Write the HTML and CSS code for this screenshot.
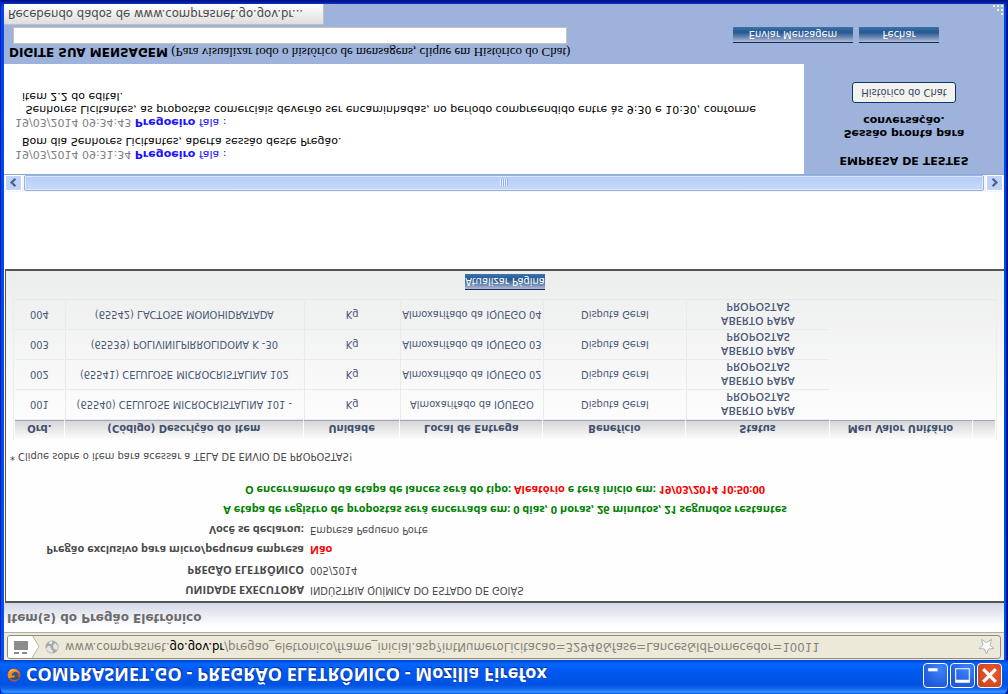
FILE: index.html
```html
<!DOCTYPE html>
<html lang="pt-BR">
<head>
<meta charset="utf-8">
<title>COMPRASNET.GO - PREGRÃO ELETRÔNICO</title>
<link rel="stylesheet" href="styles.css">
</head>
<body>
<div class="window">
  <header class="titlebar">
    <svg class="app-icon" viewBox="0 0 14 14" aria-hidden="true">
      <circle cx="7" cy="7" r="6.5" fill="#d9531e"/>
      <path d="M2 4Q6 1 11 3L13 7Q12 4 9 4L4 6Z" fill="#243c78"/>
      <circle cx="7.5" cy="6.5" r="3.8" fill="#245a8c"/>
      <path d="M1 5Q0 12 6 13Q11 13 13 8Q10 11 7 10Q4 8 5 6L7 7L8 5L4 4Q2 3 1 5Z" fill="#f58b22"/>
      <path d="M2 9Q5 13 10 11Q7 14 3 12Z" fill="#ffc53a"/>
    </svg>
    <h1 class="title">COMPRASNET.GO - PREGRÃO ELETRÔNICO - Mozilla Firefox</h1>
    <div class="controls">
      <button class="control" type="button" aria-label="Minimizar"><svg viewBox="0 0 22 22"><path d="M4 15h9v3H4z" fill="#fff"/></svg></button>
      <button class="control" type="button" aria-label="Maximizar"><svg viewBox="0 0 22 22"><path d="M4 4h14v14H4zM5 7v10h12V7z" fill="#fff" fill-rule="evenodd"/></svg></button>
      <button class="control control-close" type="button" aria-label="Fechar janela"><svg viewBox="0 0 22 22"><path d="M5 5L17 17M17 5L5 17" stroke="#fff" stroke-width="3"/></svg></button>
    </div>
  </header>

  <div class="content">
    <div class="address-strip">
      <div class="address">
        <svg class="identity" viewBox="0 0 32 23" aria-hidden="true">
          <path d="M0 0H24L31 11.500L24 23H0Z" fill="#fff"/>
          <path d="M24 0L31 11.500L24 23" fill="none" stroke="#b9b6a8"/>
          <path d="M6 4h5v2H6zM14 4h5v2h-5zM6 8h14v9H6z" fill="#8b8b8b"/>
        </svg>
        <svg class="globe" viewBox="0 0 14 14" aria-hidden="true">
          <circle cx="7" cy="7" r="6.500" fill="#a9a9a9"/>
          <path d="M1 5L4 2L7 1L8 3L6 5L5 8L3 8ZM9 5L12 4L13 8L10 11L8 8ZM4 10L7 10L7 13L4 12Z" fill="#e6e6e4"/>
        </svg>
        <span class="url">www.comprasnet.<b>go.gov.br</b>/pregao_eletronico/frame_inicial.asp?intNumeroLicitacao=32946&amp;fase=Lances&amp;IdFornecedor=10011</span>
        <svg class="star" viewBox="0 0 17 17" aria-hidden="true"><path d="M8.500 1L10.500 6L16 6.500L12 10L13.500 15.500L8.500 12.500L3.500 15.500L5 10L1 6.500L6.500 6Z" fill="#fbfbfb" stroke="#b5b5b5"/></svg>
      </div>
    </div>

    <h2 class="page-heading">Item(s) do Pregão Eletrônico</h2>

    <main class="auction">
      <dl class="facts">
        <dt>UNIDADE EXECUTORA</dt><dd>INDÚSTRIA QUÍMICA DO ESTADO DE GOIÁS</dd>
        <dt>PREGÃO ELETRÔNICO</dt><dd>005/2014</dd>
        <dt>Pregão exclusivo para micro/pequena empresa</dt><dd class="alert">Não</dd>
        <dt>Você se declarou:</dt><dd>Empresa Pequeno Porte</dd>
      </dl>
      <p class="stage">A etapa de registro de propostas será encerrada em: 0 dias, 0 horas, 26 minutos, 21 segundos restantes</p>
      <p class="stage">O encerramento da etapa de lances será do tipo: <span class="alert">Aleatório</span> e terá início em: <span class="alert">19/03/2014 10:50:00</span></p>
      <p class="hint">* Clique sobre o item para acessar a TELA DE ENVIO DE PROPOSTAS!</p>
      <div class="lot">
        <table class="items">
          <colgroup><col class="c-ord"><col class="c-item"><col class="c-unit"><col class="c-wide"><col class="c-wide"><col class="c-wide"><col class="c-wide"><col class="c-end"></colgroup>
          <thead><tr><th>Ord.</th><th>(Código) Descrição do Item</th><th>Unidade</th><th>Local de Entrega</th><th>Benefício</th><th>Status</th><th>Meu Valor Unitário</th><th></th></tr></thead>
          <tbody>
            <tr><td>001</td><td>(65540) CELULOSE MICROCRISTALINA 101 -</td><td>Kg</td><td>Almoxarifado da IQUEGO</td><td>Disputa Geral</td><td class="status">ABERTO PARA PROPOSTAS</td><td class="blank" colspan="2"></td></tr>
            <tr><td>002</td><td>(65541) CELULOSE MICROCRISTALINA 102</td><td>Kg</td><td>Almoxarifado da IQUEGO 02</td><td>Disputa Geral</td><td class="status">ABERTO PARA PROPOSTAS</td><td class="blank" colspan="2"></td></tr>
            <tr><td>003</td><td>(65539) POLIVINILPIRROLIDONA K -30</td><td>Kg</td><td>Almoxarifado da IQUEGO 03</td><td>Disputa Geral</td><td class="status">ABERTO PARA PROPOSTAS</td><td class="blank" colspan="2"></td></tr>
            <tr><td>004</td><td>(65542) LACTOSE MONOHIDRATADA</td><td>Kg</td><td>Almoxarifado da IQUEGO 04</td><td>Disputa Geral</td><td class="status">ABERTO PARA PROPOSTAS</td><td class="blank" colspan="2"></td></tr>
          </tbody>
        </table>
        <button class="action action-refresh" type="button">Atualizar Página</button>
      </div>
    </main>

    <div class="spacer"></div>

    <div class="scrollbar">
      <button class="arrow" type="button" aria-label="Rolar para a esquerda"><svg viewBox="0 0 16 16"><path d="M10 4L6 8L10 12" fill="none" stroke="#4d6185" stroke-width="2.500"/></svg></button>
      <div class="thumb"><svg class="grip" viewBox="0 0 8 7"><path d="M.5 0v7M2.500 0v7M4.500 0v7M6.500 0v7" stroke="#eef4fe"/><path d="M1.500 0v7M3.500 0v7M5.500 0v7M7.500 0v7" stroke="#8cb0f8"/></svg></div>
      <button class="arrow" type="button" aria-label="Rolar para a direita"><svg viewBox="0 0 16 16"><path d="M6 4L10 8L6 12" fill="none" stroke="#4d6185" stroke-width="2.500"/></svg></button>
    </div>

    <section class="chat">
      <div class="log">
        <article class="entry">
          <p><time>19/03/2014 09:31:34</time> <span class="speaker"><b>Pregoeiro</b> fala :</span></p>
          <p class="said">Bom dia Senhores Licitantes, aberta sessão deste Pregão.</p>
        </article>
        <article class="entry">
          <p><time>19/03/2014 09:34:43</time> <span class="speaker"><b>Pregoeiro</b> fala :</span></p>
          <p class="said">&nbsp;Senhores Licitantes, as propostas comerciais deverão ser encaminhadas, no período compreendido entre às 9:30 e 10:30, conforme<br>item 2.2 do edital.</p>
        </article>
      </div>
      <aside class="session">
        <p>EMPRESA DE TESTES</p>
        <p class="ready">Sessão pronta para<br>conversação.</p>
        <button class="history" type="button">Histórico do Chat</button>
      </aside>
    </section>

    <form class="compose">
      <div class="message">
        <label for="message"><b>DIGITE SUA MENSAGEM</b> (Para visualizar todo o histórico de mensagens, clique em Histórico do Chat)</label>
        <input id="message" type="text">
      </div>
      <div class="actions">
        <button class="action action-send" type="button">Enviar Mensagem</button>
        <button class="action action-exit" type="button">Fechar</button>
      </div>
    </form>

    <footer class="bottom">
      <div class="loading">Recebendo dados de www.comprasnet.go.gov.br...</div>
      <svg class="resize" viewBox="0 0 11 11" aria-hidden="true"><path d="M8 0h2v2H8zM4 4h2v2H4zM8 4h2v2H8zM0 8h2v2H0zM4 8h2v2H4zM8 8h2v2H8z" fill="#f2efdf"/></svg>
    </footer>
  </div>
</div>
</body>
</html>
```
FILE: styles.css
```css
* { box-sizing: border-box; }
body { margin: 0; background: #9db3dc; }
h1, h2, p, dl, dd { margin: 0; }
button, input { font: inherit; margin: 0; padding: 0; }
svg { display: block; }

/* The whole window is mirrored top to bottom. */
.window {
  display: flex;
  flex-direction: column;
  min-height: 100vh;
  padding: 0 4px 4px;
  background: linear-gradient(#0050e8, #0046e0 99%, #001690);
  box-shadow: inset 1px 0 #0019cf, inset -1px 0 #00138c, inset -2px 0 #001ea0, inset 0 -2px #00138c;
  transform: scaleY(-1);
  font: 11px/14px "DejaVu Sans Condensed", "DejaVu Sans", sans-serif;
  color: #4a4a4a;
}

.titlebar {
  display: flex;
  align-items: center;
  gap: 5px;
  height: 34px;
  margin: 0 -4px;
  padding: 3px 6px 0 7px;
  border-radius: 7px 7px 0 0;
  background: linear-gradient(#0058e6 0, #3a93ff 2px, #1268f0 5px, #0053e1 9px, #0058ee 22px, #0066ff 30px, #003fd0 34px);
}
.app-icon { width: 14px; height: 14px; }
.title {
  flex: 1;
  font: bold 18px/24px "Open Sans", sans-serif;
  color: #fff;
  text-shadow: 1px 1px #0a2b96;
  white-space: nowrap;
}
.controls { display: flex; gap: 2px; }
.control {
  width: 25px;
  height: 25px;
  border: 1px solid #fff;
  border-radius: 4px;
  background: radial-gradient(circle at 70% 80%, #3d84fc, #2159dc 75%);
}
.control-close { background: radial-gradient(circle at 60% 60%, #ea5a30, #c9401a); }

.content { flex: 1; display: flex; flex-direction: column; background: #fff; }

.address-strip { padding: 1px 3px 2px; background: #ece9d8; border-bottom: 1px solid #b0aea5; }
.address {
  display: flex;
  align-items: center;
  height: 24px;
  border: 1px solid #8f8c80;
  border-radius: 3px;
  overflow: hidden;
}
.identity { width: 32px; height: 23px; }
.globe { width: 14px; height: 14px; margin: 0 6px 0 5px; }
.url { flex: 1; font-size: 13px; line-height: 20px; color: #85827a; white-space: nowrap; }
.url b { font-weight: normal; color: #000; }
.star { width: 17px; height: 17px; margin-right: 5px; }

.page-heading {
  padding: 7px 3px 8px;
  font: bold 12px/14px "DejaVu Sans", sans-serif;
  color: #6b6b6b;
  background: linear-gradient(#fff 20%, #d4d8e6);
}

.auction {
  margin-left: 1px;
  padding: 1px 7px 3px;
  border-top: 2px solid #555;
  border-bottom: 2px solid #555;
  border-left: 1px solid #555;
  background: linear-gradient(#fefefe 50%, #eceded);
}
.facts { display: grid; grid-template-columns: 291px 1fr; column-gap: 6px; line-height: 20px; }
.facts dt { text-align: right; font: bold 11px/20px "Open Sans", sans-serif; }
.facts .alert { font: bold 11px/20px "Open Sans", sans-serif; }
.stage { font: bold 11px/20px "Open Sans", sans-serif; text-align: center; color: #008000; }
.alert { color: #f00; }
.hint { margin: 17px -3px 9px; line-height: 14px; }

.lot { border: 1px solid #eceded; border-top: 0; text-align: center; border-bottom: 0; }
.items { width: 100%; table-layout: fixed; border-spacing: 1px 0; color: #4a5875; border-bottom: 1px solid #e8e8e8; }
.c-ord { width: 5%; }
.c-item { width: 24.500%; }
.c-unit { width: 9.800%; }
.c-wide { width: 14.600%; }
.c-end { width: 2.300%; }
.items th {
  height: 20px;
  padding: 4px 0 0;
  font: bold 10px/14px "DejaVu Sans", sans-serif;
  color: #40506e;
  background: linear-gradient(#fff, #d6d6d8);
  border-bottom: 1px solid #9aa8c6;
}
.items td { height: 30px; padding: 0; border: solid #e9eaec; border-width: 1px 0 0 1px; line-height: 14px; white-space: nowrap; }
.items td:first-child, .items .blank { border-left: 0; }
.items .blank { border-top: 0; }
.items .status { padding: 0 30px; white-space: normal; font: 600 11px/14px "Open Sans", sans-serif; }

.action {
  height: 16px;
  border: 0;
  border-top: 1px solid #14285c;
  font-size: 11px;
  line-height: 14px;
  color: #fff;
  white-space: nowrap;
  overflow: hidden;
  background: linear-gradient(#b4bcd2, #5679ab 40%, #25578f 65%, #3c74ae);
}
.action-refresh { width: 80px; margin-top: 9px; }
.action-send { width: 120px; }
.action-exit { width: 80px; }

.spacer { flex: 1; min-height: 76px; }

.scrollbar { display: flex; gap: 2px; height: 18px; padding: 1px 1px 0; border-bottom: 1px solid #8cabd6; background: #f6f5ef; }
.arrow { width: 17px; height: 16px; border: 1px solid #fff; border-radius: 2px; background: #c0d3fb; }
.thumb { flex: 1; display: flex; align-items: center; justify-content: center; border: 1px solid #98b4e6; border-radius: 2px; background: linear-gradient(#c9d8fd, #b4cefc); box-shadow: inset 0 0 0 1px #dce8fd; }
.grip { width: 8px; height: 7px; }

.chat { display: flex; background: #9db3dc; color: #000; font: 11px/13px "DejaVu Sans", sans-serif; }
.log { width: 80%; min-height: 110px; padding: 13px 12px 0 11px; background: #fff; }
.entry { margin-bottom: 6px; }
.said { padding-left: 7px; white-space: nowrap; }
.log time { color: #808080; }
.speaker { color: #2010ff; }
.session { flex: 1; padding-top: 7px; text-align: center; font-weight: bold; }
.ready { margin: 14px 0 11px; }
.history {
  width: 104px;
  height: 21px;
  border: 1px solid #003c74;
  border-radius: 3px;
  background: #f3f2ec;
  font: 11px/14px "DejaVu Sans Condensed", sans-serif;
  color: #30466c;
}

.compose { display: flex; align-items: flex-end; background: #9db3dc; padding: 4px 65px 2px 5px; }
.message { flex: 1; display: flex; flex-direction: column; color: #000; }
.message label { font: 13px/16px "Liberation Serif", serif; white-space: nowrap; }
.message label b { font: bold 12px/16px "DejaVu Sans", sans-serif; }
.message input { width: 554px; max-width: 100%; height: 17px; margin-left: 4px; padding: 0 3px; border: 1px solid #c4c4bc; background: #fff; }
.actions { display: flex; gap: 6px; }

.bottom { display: flex; justify-content: space-between; align-items: flex-end; background: #9db3dc; }
.loading { width: 320px; padding: 2px 4px 3px; border: solid #c0c0bc; border-width: 1px 1px 0 0; font-size: 13px; line-height: 15px; background: linear-gradient(#dedede, #fff); }
.resize { width: 11px; height: 11px; }
```
